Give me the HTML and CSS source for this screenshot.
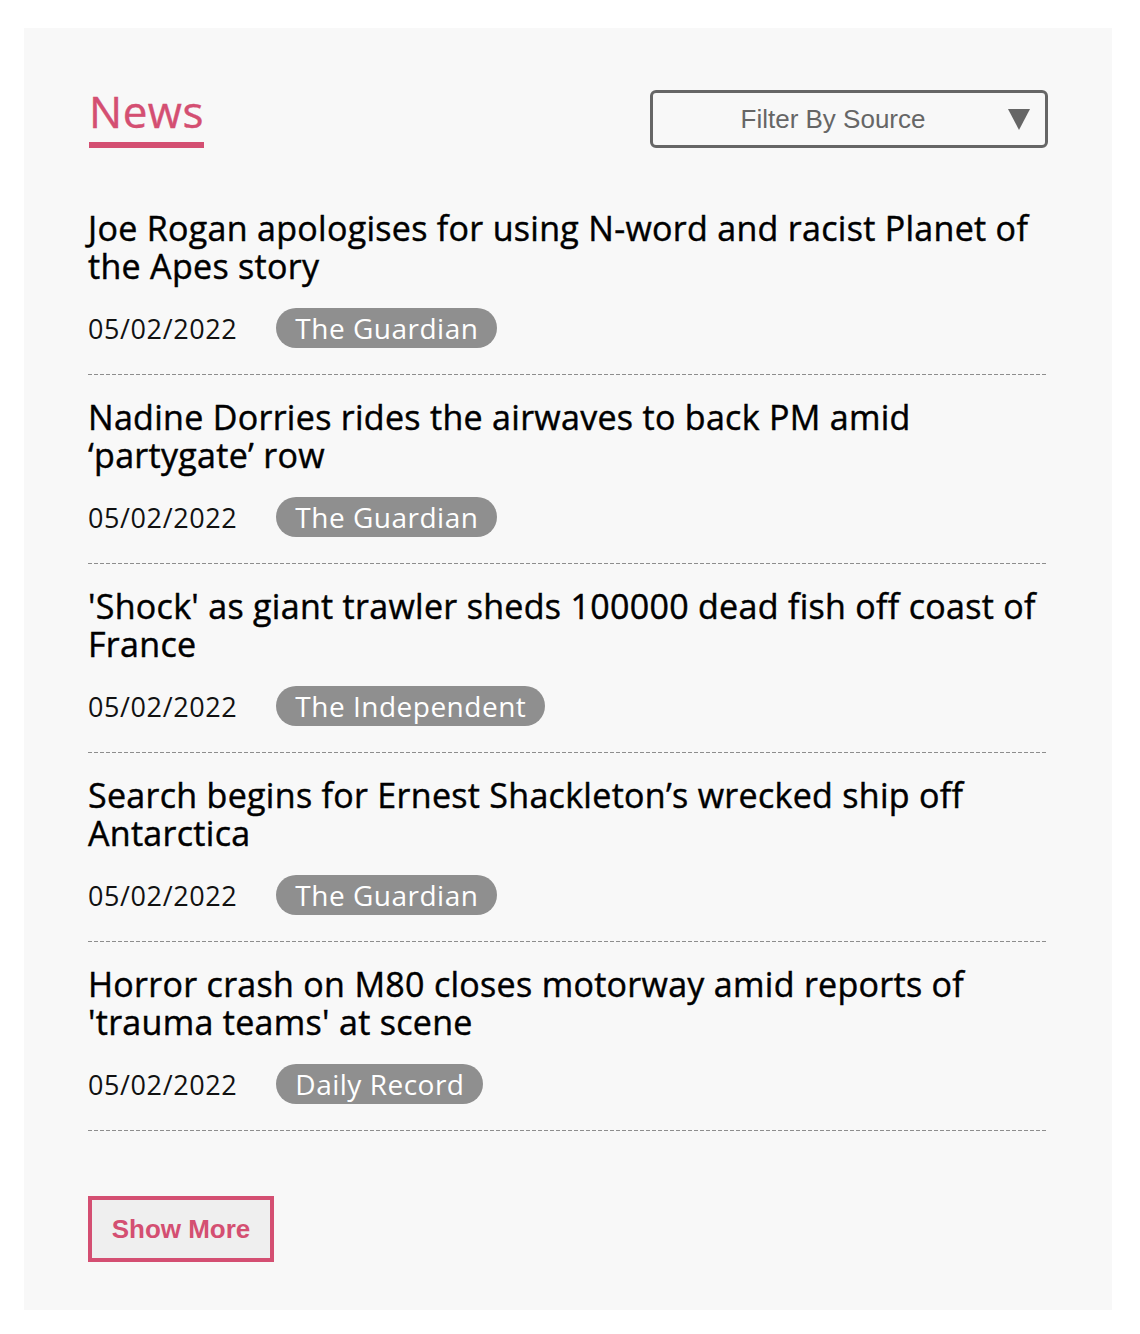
FILE: index.html
```html
<!DOCTYPE html>
<html lang="en">
<head>
<meta charset="utf-8">
<title>News</title>
<link rel="stylesheet" href="styles.css">
</head>
<body>
<section class="card">
  <header class="card-head">
    <h2 class="title">News</h2>
    <div class="filter">
      <span class="filter-label">Filter By Source</span>
      <svg class="filter-arrow" width="22" height="21" viewBox="0 0 22 21"><polygon points="0,0 22,0 11,21" fill="#666"/></svg>
    </div>
  </header>
  <ul class="list">
    <li class="item">
      <h3 class="headline">Joe Rogan apologises for using N-word and racist Planet of the Apes story</h3>
      <div class="meta"><span class="date">05/02/2022</span><span class="pill">The Guardian</span></div>
    </li>
    <li class="item">
      <h3 class="headline">Nadine Dorries rides the airwaves to back PM amid ‘partygate’ row</h3>
      <div class="meta"><span class="date">05/02/2022</span><span class="pill">The Guardian</span></div>
    </li>
    <li class="item">
      <h3 class="headline">'Shock' as giant trawler sheds 100000 dead fish off coast of France</h3>
      <div class="meta"><span class="date">05/02/2022</span><span class="pill">The Independent</span></div>
    </li>
    <li class="item">
      <h3 class="headline">Search begins for Ernest Shackleton’s wrecked ship off Antarctica</h3>
      <div class="meta"><span class="date">05/02/2022</span><span class="pill">The Guardian</span></div>
    </li>
    <li class="item">
      <h3 class="headline">Horror crash on M80 closes motorway amid reports of 'trauma teams' at scene</h3>
      <div class="meta"><span class="date">05/02/2022</span><span class="pill">Daily Record</span></div>
    </li>
  </ul>
  <button class="more" type="button">Show More</button>
</section>
</body>
</html>
```
FILE: styles.css
```css
html, body {
  margin: 0;
  padding: 0;
  background: #ffffff;
}

.card {
  margin: 28px 28px 24px 24px;
  padding: 62px 64px 48px 64px;
  background: #f8f8f8;
  font-family: "Open Sans", "DejaVu Sans", sans-serif;
  color: #000;
}

.card-head {
  display: flex;
  justify-content: space-between;
  align-items: flex-start;
  margin-bottom: 37px;
}

.title {
  margin: 0 0 0 1px;
  display: inline-block;
  font-size: 44px;
  line-height: 42px;
  font-weight: 400;
  letter-spacing: 0.5px;
  -webkit-text-stroke: 0.4px #d44f72;
  color: #d44f72;
  padding-bottom: 10px;
  border-bottom: 6px solid #d44f72;
}

.filter {
  box-sizing: border-box;
  width: 398px;
  height: 58px;
  border: 3px solid #666;
  border-radius: 6px;
  display: flex;
  align-items: center;
  padding: 0 15px 0 5px;
}

.filter-label {
  flex: 1;
  text-align: center;
  font-family: "Liberation Sans", Arial, sans-serif;
  font-size: 26px;
  color: #666;
}

.filter-arrow {
  display: block;
}

.list {
  list-style: none;
  margin: 0;
  padding: 0;
}

.item {
  padding: 24px 0 27px;
  background: repeating-linear-gradient(to right, #8e8e8e 0 4px, transparent 4px 6px) left bottom / 100% 1px no-repeat;
}

.item + .item {
  padding-top: 23px;
}

.headline {
  margin: 0;
  font-size: 34px;
  line-height: 38px;
  font-weight: 400;
  letter-spacing: 0.3px;
  -webkit-text-stroke: 0.45px #000;
  color: #000;
}

.meta {
  display: flex;
  align-items: center;
  gap: 39px;
  margin-top: 23px;
}

.date {
  font-size: 27px;
  letter-spacing: 0.6px;
  font-weight: 400;
  color: #111;
}

.pill {
  height: 40px;
  line-height: 40px;
  padding: 0 19px;
  border-radius: 20px;
  background: #8f8f8f;
  color: #fff;
  font-size: 28px;
  letter-spacing: 0.5px;
  font-weight: 400;
}

.more {
  margin-top: 65px;
  display: block;
  box-sizing: border-box;
  width: 186px;
  height: 66px;
  border: 4px solid #d44f72;
  background: #efefef;
  color: #d44f72;
  font-family: "Liberation Sans", Arial, sans-serif;
  font-size: 26px;
  font-weight: 700;
  padding: 0;
  border-radius: 0;
}
```
